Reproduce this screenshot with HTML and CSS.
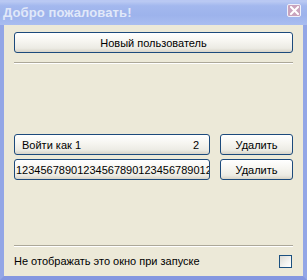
FILE: index.html
```html
<!doctype html>
<html>
  <head>
    <meta charset="utf-8">
    <title>Добро пожаловать!</title>
    <link rel="stylesheet" href="styles.css">
  </head>
  <body>
    <div class="window">
      <div class="titlebar">
        <span class="title">Добро пожаловать!</span>
        <span class="close">
          <svg width="9" height="9" viewBox="0 0 9 9"><path d="M1 1 L8 8 M8 1 L1 8" stroke="#fff" stroke-width="2" stroke-linecap="square"/></svg>
        </span>
      </div>

      <div class="content">
        <button class="btn btn-wide">Новый пользователь</button>
        <div class="sep"></div>

        <div class="list">
          <div class="row">
            <button class="btn field"><span>Войти как 1</span><span>2</span></button>
            <button class="btn del">Удалить</button>
          </div>
          <div class="row">
            <button class="btn field field-clip"><span>12345678901234567890123456789012</span></button>
            <button class="btn del">Удалить</button>
          </div>
        </div>

        <div class="footer">
          <div class="sep"></div>
          <label class="check-row">
            <span>Не отображать это окно при запуске</span>
            <span class="check"></span>
          </label>
        </div>
      </div>
    </div>
  </body>
</html>
```

FILE: styles.css
```css
* {
  box-sizing: border-box;
}

html,
body {
  margin: 0;
  padding: 0;
  background: #ece9d8;
}
body {
  font-family: "Liberation Sans", Arial, sans-serif;
  font-size: 11px;
  color: #000;
}
.window {
  width: 307px;
  height: 280px;
  display: flex;
  flex-direction: column;
}
.titlebar {
  height: 25px;
  display: flex;
  align-items: center;
  justify-content: space-between;
  padding: 0 6px 2px 3px;
  background: linear-gradient(to bottom, #bccbf3 0%, #a3b8ee 20%, #9db3ec 60%, #a9bdf0 100%);
  border-top: 1px solid #b9c8f3;
}
.title {
  font-weight: bold;
  font-size: 13px;
  color: #e1e8f9;
  letter-spacing: 0.1px;
}
.close {
  width: 14px;
  height: 13px;
  margin-top: -3px;
  display: flex;
  align-items: center;
  justify-content: center;
  background: #c9a3bd;
  border: 1px solid #eef0fb;
  border-radius: 2px;
}
.content {
  flex: 1;
  display: flex;
  flex-direction: column;
  padding: 7px 10px 0;
  border-left: 4px solid #93a6e6;
  border-right: 4px solid #93a6e6;
  border-bottom: 4px solid #8497e0;
  background: #ece9d8;
}
.btn {
  font-family: inherit;
  font-size: 11px;
  color: #000;
  height: 21px;
  padding: 0 4px;
  border: 1px solid #1c4a7c;
  border-radius: 3px;
  background: linear-gradient(to bottom, #ffffff 0%, #f6f5f0 45%, #ecebe4 80%, #d8d4c8 100%);
  margin: 0;
}
.btn-wide {
  width: 100%;
}
.sep {
  height: 2px;
  border-top: 1px solid #aca899;
  border-bottom: 1px solid #fff;
  margin-top: 9px;
}
.list {
  margin-top: 70px;
  display: flex;
  flex-direction: column;
  gap: 4px;
}
.row {
  display: flex;
  gap: 10px;
}
.field {
  flex: 1;
  display: flex;
  align-items: center;
  justify-content: space-between;
  padding: 0 10px 0 7px;
  overflow: hidden;
  white-space: nowrap;
}
.field-clip {
  padding: 0 0 0 1px;
  justify-content: flex-start;
}
.del {
  width: 73px;
}
.footer {
  margin-top: auto;
}
.footer .sep {
  margin-top: 0;
}
.check-row {
  display: flex;
  align-items: center;
  justify-content: space-between;
  height: 29px;
  padding: 0 1px 1px 0;
}
.check {
  width: 13px;
  height: 13px;
  border: 1px solid #1c5180;
  background: linear-gradient(135deg, #dcdbd5 0%, #f4f4f1 60%, #ffffff 100%);
}
```
